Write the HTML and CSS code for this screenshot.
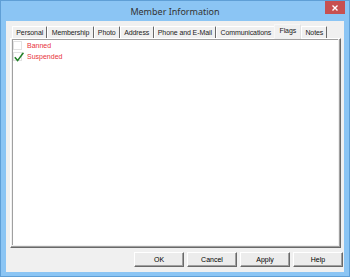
FILE: index.html
```html
<!DOCTYPE html>
<html lang="en">

<head>
    <meta charset="UTF-8">
    <title>Member Information</title>
    <link rel="stylesheet" href="styles.css">
</head>

<body>

    <div class="window">
        <!-- Barra de titulo -->
        <div class="titlebar">
            <span class="title">Member Information</span>
            <div class="close">
                <svg width="8" height="8" viewBox="0 0 8 8">
                    <path d="M1.5 1.5 L6.5 6.5 M6.5 1.5 L1.5 6.5" stroke="#fff" stroke-width="1.4" fill="none"/>
                </svg>
            </div>
        </div>

        <div class="client">
            <!-- Pestanas -->
            <div class="tabs">
                <div class="tab">Personal</div>
                <div class="tab">Membership</div>
                <div class="tab">Photo</div>
                <div class="tab">Address</div>
                <div class="tab">Phone and E-Mail</div>
                <div class="tab">Communications</div>
                <div class="tab active">Flags</div>
                <div class="tab">Notes</div>
            </div>

            <div class="panel">
                <ul class="list">
                    <li><span class="check"></span>Banned</li>
                    <li>
                        <span class="check">
                            <svg width="10" height="10" viewBox="0 0 10 10">
                                <path d="M0.8 5.2 L3.6 8.6 L9.4 0.8" stroke="#1f7f25" stroke-width="1.5" fill="none"/>
                            </svg>
                        </span>Suspended
                    </li>
                </ul>
            </div>

            <!-- Botones -->
            <div class="buttons">
                <button class="default">OK</button>
                <button>Cancel</button>
                <button>Apply</button>
                <button>Help</button>
            </div>
        </div>
    </div>

</body>

</html>
```

FILE: styles.css
```css
body {
    margin: 0;
    padding: 0;
    font-family: "Liberation Sans", Arial, sans-serif;
}

.window {
    width: 350px;
    height: 277px;
    box-sizing: border-box;
    border: 1px solid #5f9fd6;
    background-color: #8bc5f4;
    display: flex;
    flex-direction: column;
}

.titlebar {
    height: 20px;
    position: relative;
    text-align: center;
}

.title {
    font-family: "Noto Sans", "Open Sans", sans-serif;
    font-size: 9px;
    line-height: 19px;
    color: #333;
}

.close {
    position: absolute;
    top: 0;
    right: 4px;
    width: 20px;
    height: 13px;
    background-color: #c75050;
    display: flex;
    justify-content: center;
    align-items: center;
}

.client {
    margin: 0 5px 4px 5px;
    height: 251px;
    box-sizing: border-box;
    background-color: #f0f0f0;
    padding: 5px 0 5px 4px;
    font-size: 7px;
    color: #000;
}

/* Pestanas */
.tabs {
    display: flex;
    height: 12px;
    margin-left: 2px;
    position: relative;
    z-index: 1;
}

.tab {
    box-sizing: border-box;
    height: 12px;
    padding: 0 3.3px;
    line-height: 11px;
    letter-spacing: -0.1px;
    border-top: 1px solid #fff;
    border-left: 1px solid #fff;
    border-right: 1px solid #696969;
    border-radius: 1px 1px 0 0;
    background-color: #f0f0f0;
    color: #222;
    white-space: nowrap;
}

.tab.active {
    height: 15px;
    margin: -2px -1px 0 -1px;
    padding: 0 4px;
    line-height: 12px;
    border-color: #f7f7f7 #e2e2e2 #e2e2e2 #f7f7f7;
}

.tab.active + .tab {
    margin-left: 1px;
}

.panel {
    width: 331px;
    height: 210px;
    box-sizing: border-box;
    border-top: 1px solid #fff;
    border-left: 1px solid #fff;
    border-right: 1px solid #696969;
    border-bottom: 1px solid #696969;
    box-shadow: inset -1px -1px 0 #a0a0a0;
    padding: 0 2px 2px 1px;
}

.list {
    list-style: none;
    margin: 0;
    padding: 0;
    height: 100%;
    box-sizing: border-box;
    background-color: #fff;
    border-top: 1px solid #a0a0a0;
    border-left: 1px solid #a0a0a0;
}

.list li {
    height: 11px;
    line-height: 11px;
    display: flex;
    align-items: center;
    color: #e8323c;
}

.check {
    width: 9px;
    height: 9px;
    box-sizing: border-box;
    border: 1px solid #e2e2e2;
    margin-right: 5px;
    position: relative;
}

.check svg {
    position: absolute;
    left: 0;
    top: -1px;
    overflow: visible;
}

/* Botones */
.buttons {
    display: flex;
    justify-content: flex-end;
    gap: 3px;
    margin-top: 4px;
    padding-right: 1px;
}

.buttons button {
    width: 50px;
    height: 15px;
    box-sizing: border-box;
    padding: 0;
    font-family: "Liberation Sans", Arial, sans-serif;
    font-size: 7px;
    color: #000;
    background-color: #ececec;
    border-top: 1px solid #fff;
    border-left: 1px solid #fff;
    border-right: 1px solid #696969;
    border-bottom: 1px solid #696969;
    box-shadow: inset -1px -1px 0 #a0a0a0;
}
```
